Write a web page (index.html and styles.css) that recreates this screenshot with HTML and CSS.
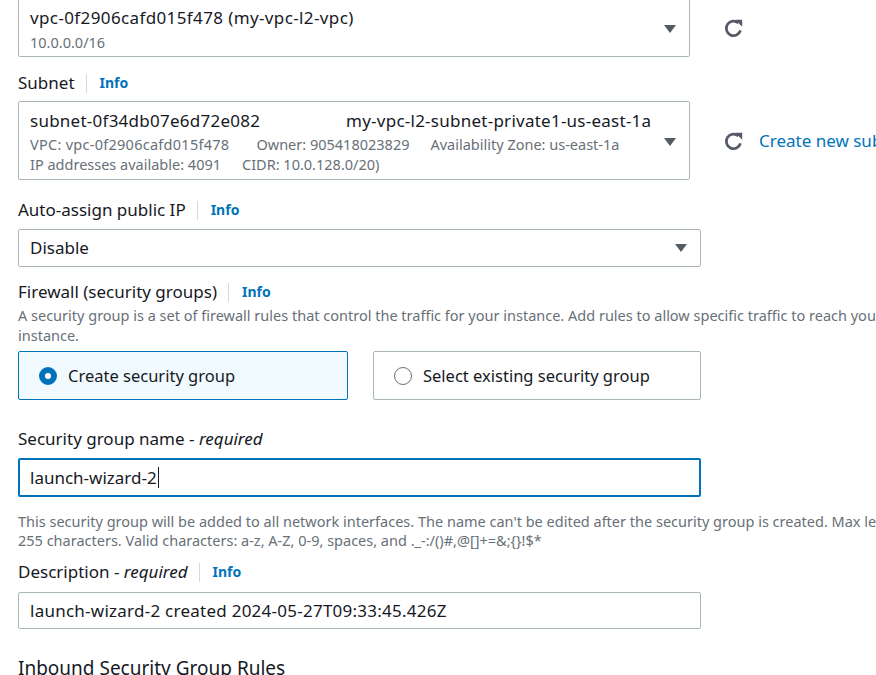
FILE: index.html
```html
<!DOCTYPE html>
<html lang="en">
<head>
<meta charset="utf-8">
<title>Network settings</title>
<link rel="stylesheet" href="styles.css">
</head>
<body>
<main class="form">
  <div class="row">
    <div class="select select-vpc">
      <div class="select-body">
        <div class="opt-main digits-wide">vpc-0f2906cafd015f478 (my-vpc-l2-vpc)</div>
        <div class="opt-sub opt-sub-first">10.0.0.0/16</div>
      </div>
      <span class="caret caret-vpc"></span>
    </div>
    <button class="icon-btn icon-vpc" aria-label="Refresh">
      <svg viewBox="0 0 16 16" width="21" height="21"><path d="M13.3 9.4A5.5 5.5 0 1 1 11.8 3.9" fill="none" stroke="#545b64" stroke-width="2.1"/><path d="M9.4 1.4 L14.6 1.4 L14.6 6.6 Z" fill="#545b64"/></svg>
    </button>
  </div>

  <div class="label label-subnet"><span>Subnet</span><span class="sep"></span><a class="info">Info</a></div>
  <div class="row">
    <div class="select select-subnet">
      <div class="select-body">
        <div class="opt-main two-col digits"><span class="col-id">subnet-0f34db07e6d72e082</span><span>my-vpc-l2-subnet-private1-us-east-1a</span></div>
        <div class="opt-sub opt-sub-first"><span class="tag tag-vpc">VPC: vpc-0f2906cafd015f478</span><span class="tag">Owner: 905418023829</span><span class="tag">Availability Zone: us-east-1a</span></div>
        <div class="opt-sub"><span class="tag">IP addresses available: 4091</span><span class="tag">CIDR: 10.0.128.0/20)</span></div>
      </div>
      <span class="caret"></span>
    </div>
    <button class="icon-btn icon-subnet" aria-label="Refresh">
      <svg viewBox="0 0 16 16" width="21" height="21"><path d="M13.3 9.4A5.5 5.5 0 1 1 11.8 3.9" fill="none" stroke="#545b64" stroke-width="2.1"/><path d="M9.4 1.4 L14.6 1.4 L14.6 6.6 Z" fill="#545b64"/></svg>
    </button>
    <a class="create-link">Create new subnet</a>
  </div>

  <div class="label label-ip"><span>Auto-assign public IP</span><span class="sep"></span><a class="info">Info</a></div>
  <div class="select select-simple">
    <div class="select-body"><div class="opt-plain">Disable</div></div>
    <span class="caret"></span>
  </div>

  <div class="label label-fw"><span>Firewall (security groups)</span><span class="sep"></span><a class="info">Info</a></div>
  <p class="desc desc-fw">A security group is a set of firewall rules that control the traffic for your instance. Add rules to allow specific traffic to reach your instance.</p>
  <div class="tiles">
    <div class="tile tile-on"><span class="radio radio-on"></span>Create security group</div>
    <div class="tile"><span class="radio"></span>Select existing security group</div>
  </div>

  <div class="label label-sgname"><span>Security group name - <em>required</em></span></div>
  <div class="input input-focus">launch-wizard-2<span class="cursor"></span></div>
  <p class="desc desc-help">This security group will be added to all network interfaces. The name can't be edited after the security group is created. Max length is 255 characters. Valid characters: a-z, A-Z, 0-9, spaces, and ._-:/()#,@[]+=&amp;;{}!$*</p>

  <div class="label label-desc"><span>Description - <em>required</em></span><span class="sep"></span><a class="info">Info</a></div>
  <div class="input input-desc digits">launch-wizard-2 created 2024-05-27T09:33:45.426Z</div>

  <h2 class="heading">Inbound Security Group Rules</h2>
</main>
</body>
</html>
```

FILE: styles.css
```css
html, body {
  margin: 0;
  padding: 0;
  background: #ffffff;
  overflow: hidden;
}
body {
  font-family: "Noto Sans", "Open Sans", "Liberation Sans", sans-serif;
  color: #16191f;
  font-size: 17px;
}
.form {
  width: 1000px;
  padding-left: 18px;
  margin-top: -6px;
}
.row {
  display: flex;
  align-items: flex-start;
}
.select {
  box-sizing: border-box;
  border: 1px solid #aab7b8;
  border-radius: 2px;
  display: flex;
  align-items: center;
  background: #fff;
}
.select-body { flex: 1; min-width: 0; }
.select-vpc {
  width: 672px;
  padding: 12px 13px 4px 11px;
}
.select-subnet {
  width: 672px;
  padding: 8px 13px 5px 11px;
}
.select-simple {
  width: 683px;
  height: 38px;
  padding: 0 13px 0 11px;
}
.opt-main {
  font-size: 17px;
  line-height: 22px;
  white-space: nowrap;
}
.digits { letter-spacing: 0.25px; }
.digits-wide { letter-spacing: 0.38px; }
.opt-plain {
  font-size: 17px;
  line-height: 22px;
}
.two-col { display: flex; }
.col-id { width: 316px; flex: none; }
.opt-sub {
  font-size: 14.5px;
  line-height: 20px;
  color: #687078;
  white-space: nowrap;
}
.opt-sub-first { margin-top: 2px; }
.select-vpc .opt-sub-first { margin-top: 3px; }
.tag { margin-right: 21px; }
.tag-vpc { margin-right: 27px; letter-spacing: 0.27px; }
.caret {
  flex: none;
  width: 0;
  height: 0;
  border-left: 6px solid transparent;
  border-right: 6px solid transparent;
  border-top: 8px solid #545b64;
}
.caret-vpc { margin-top: -1px; }
.icon-btn {
  border: 0;
  background: none;
  padding: 0;
  margin-left: 32px;
  width: 22px;
  height: 22px;
  display: flex;
  align-items: center;
  justify-content: center;
}
.icon-vpc { margin-top: 23px; }
.icon-subnet { margin-top: 29px; }
.create-link {
  color: #0073bb;
  font-size: 17px;
  line-height: 22px;
  margin-left: 15px;
  margin-top: 29px;
  white-space: nowrap;
}
.label {
  display: flex;
  align-items: center;
  font-size: 17px;
  line-height: 22px;
  height: 22px;
  white-space: nowrap;
}
.label em { font-style: italic; }
.sep {
  width: 1px;
  height: 19px;
  background: #d5dbdb;
  margin: 0 13px 0 11px;
}
.info {
  color: #0073bb;
  font-weight: 700;
  font-size: 14px;
}
.label-subnet { margin-top: 15px; margin-bottom: 7px; }
.label-ip { margin-top: 19px; margin-bottom: 8px; }
.label-fw { margin-top: 14px; }
.desc {
  margin: 0;
  font-size: 14.5px;
  line-height: 20px;
  color: #687078;
  width: 915px;
}
.desc-fw { margin-top: 2px; margin-bottom: 6px; }
.tiles {
  display: grid;
  grid-template-columns: 330px 328px;
  column-gap: 25px;
}
.tile {
  box-sizing: border-box;
  height: 49px;
  border: 1px solid #aab7b8;
  border-radius: 2px;
  display: flex;
  align-items: center;
  padding-left: 20px;
  font-size: 16.5px;
}
.tile-on {
  background: #f1faff;
  border-color: #0073bb;
}
.radio {
  box-sizing: border-box;
  width: 18px;
  height: 18px;
  border-radius: 50%;
  border: 1.5px solid #687078;
  margin-right: 11px;
  flex: none;
}
.radio-on {
  border: 6px solid #0073bb;
  background: #fff;
}
.label-sgname { margin-top: 28px; margin-bottom: 8px; }
.input {
  box-sizing: border-box;
  width: 683px;
  border: 1px solid #aab7b8;
  border-radius: 2px;
  font-size: 17px;
  line-height: 22px;
  padding: 0 11px;
  display: flex;
  align-items: center;
}
.input-focus {
  height: 39px;
  border: 2px solid #0073bb;
  padding-left: 10px;
}
.cursor {
  width: 1px;
  height: 21px;
  background: #16191f;
  margin-left: 1px;
}
.input-desc { height: 37px; }
.desc-help {
  margin-top: 15px;
  line-height: 19px;
}
.label-desc { margin-top: 11px; margin-bottom: 9px; }
.heading {
  margin: 27px 0 0 0;
  font-size: 19px;
  font-weight: 400;
  line-height: 24px;
}
```
